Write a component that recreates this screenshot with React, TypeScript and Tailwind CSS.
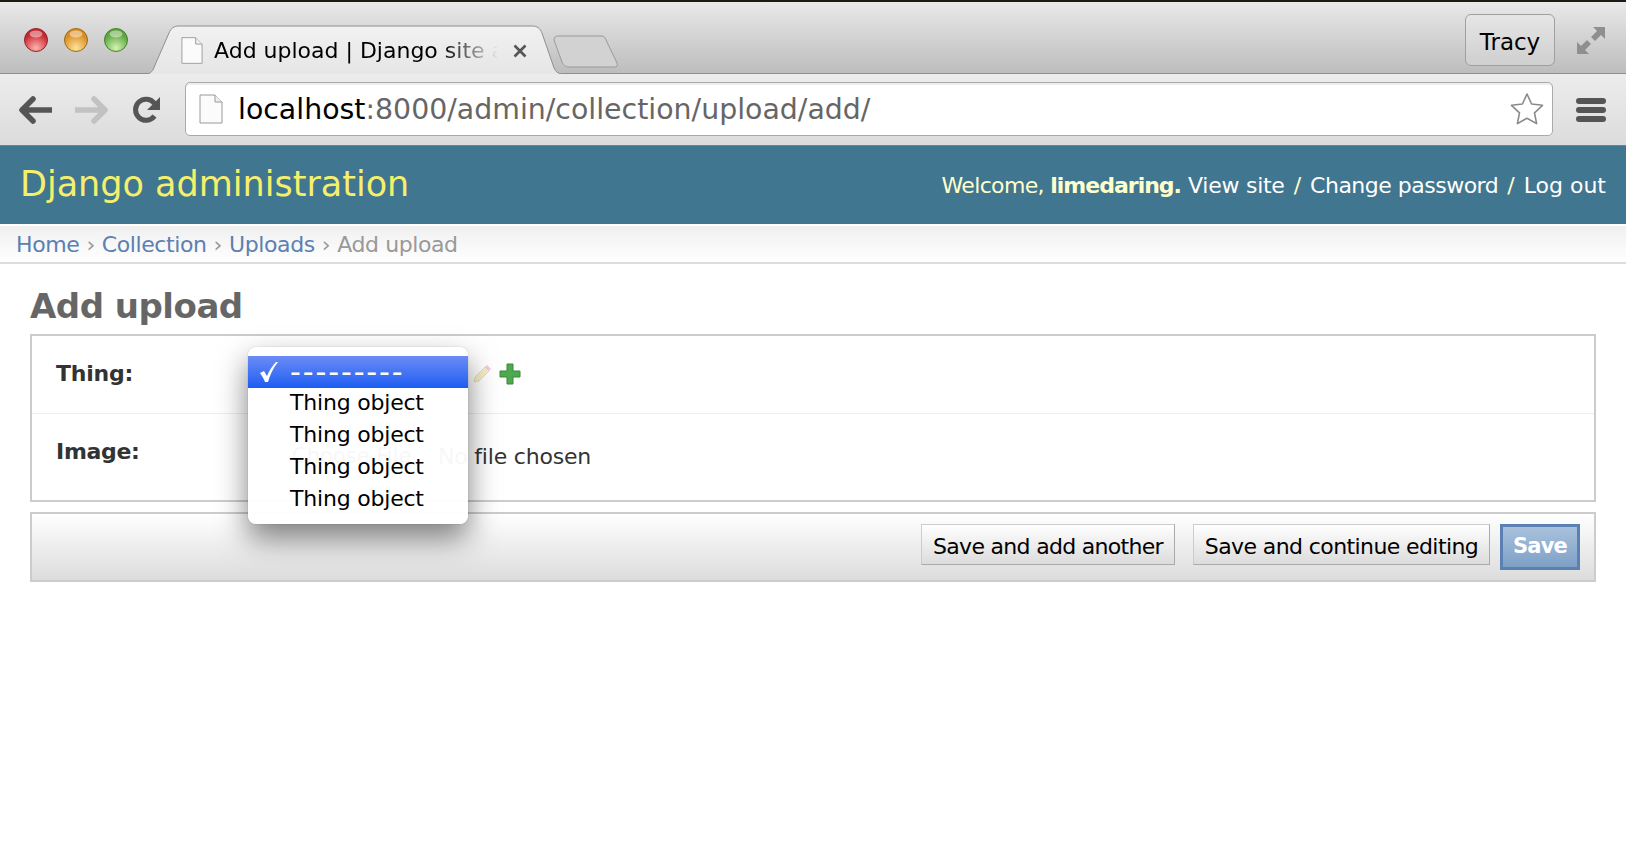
import type { ReactNode } from "react";

const lucida = "font-['DejaVu_Sans',sans-serif]";

function TrafficLight({ from, to, ring }: { from: string; to: string; ring: string }) {
  return (
    <svg width="26" height="26" viewBox="0 0 26 26">
      <defs>
        <radialGradient id={`light-${ring}`} cx="50%" cy="85%" r="65%">
          <stop offset="0%" stopColor={to} />
          <stop offset="100%" stopColor={from} />
        </radialGradient>
      </defs>
      <circle cx="13" cy="13" r="11.5" fill={`url(#light-${ring})`} stroke={ring} strokeWidth="1" />
      <ellipse cx="13" cy="7" rx="6.5" ry="3.5" fill="#fff" opacity="0.45" />
    </svg>
  );
}

function PageIcon({ w, h }: { w: number; h: number }) {
  return (
    <svg width={w} height={h} viewBox="0 0 24 30">
      <path d="M1 1h15l7 7v21H1z" fill="#fbfbfb" stroke="#9a9a9a" strokeWidth="1" />
      <path d="M16 1v7h7" fill="#eee" stroke="#9a9a9a" strokeWidth="1" />
    </svg>
  );
}

function TabStrip() {
  return (
    <div className="flex h-[72px] items-start bg-gradient-to-b from-[#e9e9e9] to-[#bdbdbd] border-b border-[#8f8f8f]">
      <div className="flex w-[148px] shrink-0 gap-[14px] pl-[23px] pt-[25px]">
        <TrafficLight from="#c8242c" to="#ffb4b0" ring="#8c2a2e" />
        <TrafficLight from="#d98a1e" to="#ffe39a" ring="#96701f" />
        <TrafficLight from="#5aa53c" to="#d4f3b4" ring="#4c7f35" />
      </div>

      {/* active tab */}
      <div className="relative mt-[23px] flex h-[49px] w-[416px] shrink-0 items-start pl-[33px] pt-[11px]">
        <svg className="absolute inset-0" width="416" height="49" viewBox="0 0 416 49">
          <defs>
            <linearGradient id="tab-fill" x1="0" y1="0" x2="0" y2="1">
              <stop offset="0%" stopColor="#f1f1f1" />
              <stop offset="100%" stopColor="#e6e6e6" />
            </linearGradient>
          </defs>
          <path
            d="M-3 49c6 0 8-3 10-9L21 8C23 3 26 1 31 1h353c5 0 8 2 10 7l11 32c2 6 4 9 11 9"
            fill="url(#tab-fill)"
            stroke="#8f8f8f"
            strokeWidth="1"
          />
        </svg>
        <div className="relative flex items-center">
          <PageIcon w={22} h={29} />
          <div
            className={`ml-[11px] w-[284px] overflow-hidden whitespace-nowrap text-[22px] leading-[29px] text-black [mask-image:linear-gradient(to_right,black_80%,transparent_100%)] ${lucida}`}
          >
            Add upload | Django site admin
          </div>
          <svg className="ml-[14px]" width="16" height="16" viewBox="0 0 16 16">
            <path d="M2.5 2.5l11 11M13.5 2.5l-11 11" stroke="#555" strokeWidth="2.6" />
          </svg>
        </div>
      </div>

      {/* new tab button */}
      <svg className="-ml-[11px] mt-[33px] shrink-0" width="66" height="33" viewBox="0 0 66 33">
        <path
          d="M1 5c0-3 2-4 4-4h43c3 0 4 1 5 4l11 23c1 3 0 4-3 4H17c-4 0-6-1-8-5z"
          fill="#d2d2d2"
          stroke="#9a9a9a"
          strokeWidth="1"
        />
      </svg>

      <div className="ml-auto mr-[20px] mt-[12px] flex items-start gap-[21px]">
        <div
          className={`flex h-[52px] w-[90px] items-center justify-center rounded-[6px] border border-[#a0a0a0] bg-gradient-to-b from-[#e6e6e6] to-[#cfcfcf] pt-[5px] text-[23px] text-black ${lucida}`}
        >
          Tracy
        </div>
        <svg className="mt-[12px]" width="30" height="29" viewBox="0 0 30 29">
          <path
            d="M17 1h12v12l-4-4-6 6-4-4 6-6zM1 16l4 4 6-6 4 4-6 6 4 4H1z"
            fill="#8f8f8f"
          />
        </svg>
      </div>
    </div>
  );
}

function Toolbar() {
  return (
    <div className="flex h-[72px] items-center border-b border-[#7f7f7f] bg-gradient-to-b from-[#ececec] to-[#dcdcdc]">
      <div className="flex w-[185px] shrink-0 items-center pl-[19px]">
        <svg width="33" height="28" viewBox="0 0 33 28">
          <path d="M14 3L3 14l11 11M4 14h28" fill="none" stroke="#555" strokeWidth="5.5" strokeLinejoin="round" strokeLinecap="round" />
        </svg>
        <svg className="ml-[23px]" width="33" height="28" viewBox="0 0 33 28">
          <path d="M19 3l11 11-11 11M29 14H1" fill="none" stroke="#c2c2c2" strokeWidth="5.5" strokeLinejoin="round" strokeLinecap="round" />
        </svg>
        <svg className="ml-[24px]" width="30" height="30" viewBox="0 0 30 30">
          <path d="M22.5 21a10.5 10.5 0 1 1 0-12.5" fill="none" stroke="#555" strokeWidth="5" />
          <path d="M28 2v13H15z" fill="#555" />
        </svg>
      </div>

      <div className="mb-[2px] flex h-[54px] w-[1368px] shrink-0 items-center rounded-[5px] border border-[#aaa] bg-white pl-[13px] pr-[7px] shadow-[inset_0_2px_0_#eee]">
        <PageIcon w={24} h={30} />
        <div className={`ml-[15px] whitespace-nowrap pt-[3px] text-[28.4px] text-[#666] ${lucida}`}>
          <span className="text-black">localhost</span>:8000/admin/collection/upload/add/
        </div>
        <svg className="ml-auto" width="36" height="36" viewBox="0 0 36 36">
          <path
            d="M18 3l4.6 10 10.9 1.3-8 7.5 2.1 10.8L18 27.2 8.4 32.6l2.1-10.8-8-7.5L13.4 13z"
            fill="#fff"
            stroke="#8a8a8a"
            strokeWidth="1.6"
            strokeLinejoin="round"
          />
        </svg>
      </div>

      <div className="ml-[23px] flex w-[30px] flex-col gap-[3px]">
        <div className="h-[6px] rounded-full bg-[#555]" />
        <div className="h-[6px] rounded-full bg-[#555]" />
        <div className="h-[6px] rounded-full bg-[#555]" />
      </div>
    </div>
  );
}

function Crumb({ children }: { children: ReactNode }) {
  return <span className="text-[#5b80b2]">{children}</span>;
}

function SubmitButton({ children, className }: { children: ReactNode; className: string }) {
  return (
    <div
      className={`flex h-[41px] items-center justify-center whitespace-nowrap border border-[#ccc] border-r-[#aaa] border-b-[#aaa] bg-gradient-to-b from-white to-[#dcdcdc] pt-[3px] text-[22px] text-black ${className}`}
    >
      {children}
    </div>
  );
}

function SelectMenu() {
  const items = ["Thing object", "Thing object", "Thing object", "Thing object"];
  return (
    <div className="absolute left-[248px] top-[347px] z-10 w-[220px] rounded-[8px] bg-white/[0.96] pb-[8px] pt-[9px] shadow-[0_14px_30px_rgba(0,0,0,0.5),0_0_1px_rgba(0,0,0,0.4)]">
      <div className="flex h-[32px] items-center bg-gradient-to-b from-[#6a8cf5] to-[#1a5cf2] pl-[11px] text-white">
        <svg className="mr-[12px] shrink-0" width="19" height="22" viewBox="0 0 19 22">
          <path d="M1 12l4-2 3 5C10 10 13 5 17 1h2C14 7 11 14 9 21H6C5 18 3 15 1 12z" fill="#fff" />
        </svg>
        <span className="text-[30px] leading-none tracking-[1.9px]">---------</span>
      </div>
      {items.map((item, i) => (
        <div key={i} className="flex h-[32px] items-center pb-[4px] pl-[42px] text-[22px] tracking-[-0.2px] text-black">
          {item}
        </div>
      ))}
    </div>
  );
}

export default function App() {
  return (
    <div className={`relative h-[866px] w-[1626px] overflow-hidden bg-white ${lucida}`}>
      <div className="h-[2px] bg-[#1c1c14]" />
      <TabStrip />
      <Toolbar />

      {/* Django header */}
      <div className="flex h-[78px] items-center justify-between bg-[#417690] pl-[20px] pr-[20px]">
        <div className="pb-[2px] text-[35px] text-[#f5f06c]">Django administration</div>
        <div className="whitespace-nowrap text-[22px] text-[#ffc]">
          <span className="tracking-[-0.65px]">
            Welcome, <span className="font-bold tracking-[-1px]">limedaring.</span>
          </span>{" "}
          <span className="tracking-[-0.25px] text-white">View site</span>
          <span className="mx-[9px]">/</span>
          <span className="tracking-[-0.5px] text-white">Change password</span>
          <span className="mx-[9px]">/</span>
          <span className="text-white">Log out</span>
        </div>
      </div>

      {/* Breadcrumbs */}
      <div className="mt-[2px] flex h-[38px] items-center border-b-2 border-[#ddd] bg-gradient-to-b from-[#f0f0f0] to-white pl-[16px] text-[22px] tracking-[-0.4px] text-[#999]">
        <Crumb>Home</Crumb>
        <span className="mx-[7px]">›</span>
        <Crumb>Collection</Crumb>
        <span className="mx-[7px]">›</span>
        <Crumb>Uploads</Crumb>
        <span className="mx-[7px]">›</span>
        <span>Add upload</span>
      </div>

      <div className="px-[30px] pt-[20px]">
        <h1 className="h-[50px] text-[34px] font-bold leading-[44px] tracking-[-0.5px] text-[#666]">Add upload</h1>

        <div className="border-2 border-[#ccc]">
          <div className="flex h-[78px] items-center border-b border-[#eee] pb-[2px] pl-[24px]">
            <div className="w-[193px] shrink-0 text-[22px] font-bold tracking-[-0.2px] text-[#333]">Thing:</div>
            <div className="ml-[223px] flex items-center gap-[7px]">
              <svg width="20" height="20" viewBox="0 0 20 20">
                <path d="M2 18l1-5L13 3l4 4L7 17z" fill="#f7efc8" stroke="#e8dfb8" strokeWidth="1" />
                <path d="M13 3l2-2 4 4-2 2z" fill="#f4c6e6" />
              </svg>
              <svg width="22" height="22" viewBox="0 0 22 22">
                <path d="M8 1h6v7h7v6h-7v7H8v-7H1V8h7z" fill="#4fa94f" stroke="#3b8a3b" strokeWidth="1" />
              </svg>
            </div>
          </div>
          <div className="flex h-[86px] items-start pl-[24px] pt-[21px]">
            <div className="w-[193px] shrink-0 text-[22px] font-bold tracking-[-0.3px] text-[#333]">Image:</div>
            <div className="ml-[43px] mt-[5px] flex items-center text-[22px] text-[#333]">
              <span className="w-[146px] text-[21px]">Choose File</span>
              <span className="tracking-[-0.2px]">No file chosen</span>
            </div>
          </div>
        </div>

        <div className="mt-[10px] flex h-[70px] items-start justify-end border-2 border-[#ccc] bg-gradient-to-b from-white to-[#dcdcdc] pr-[14px] pt-[10px]">
          <SubmitButton className="w-[254px] tracking-[-0.7px]">Save and add another</SubmitButton>
          <SubmitButton className="ml-[18px] w-[297px] tracking-[-0.6px]">Save and continue editing</SubmitButton>
          <div className="ml-[10px] flex h-[46px] w-[80px] items-center justify-center border-[3px] border-[#5b80b2] bg-gradient-to-b from-[#a9c2dc] to-[#7ea0c6] text-[21px] font-bold tracking-[-0.8px] text-white">
            Save
          </div>
        </div>
      </div>

      <SelectMenu />
    </div>
  );
}
